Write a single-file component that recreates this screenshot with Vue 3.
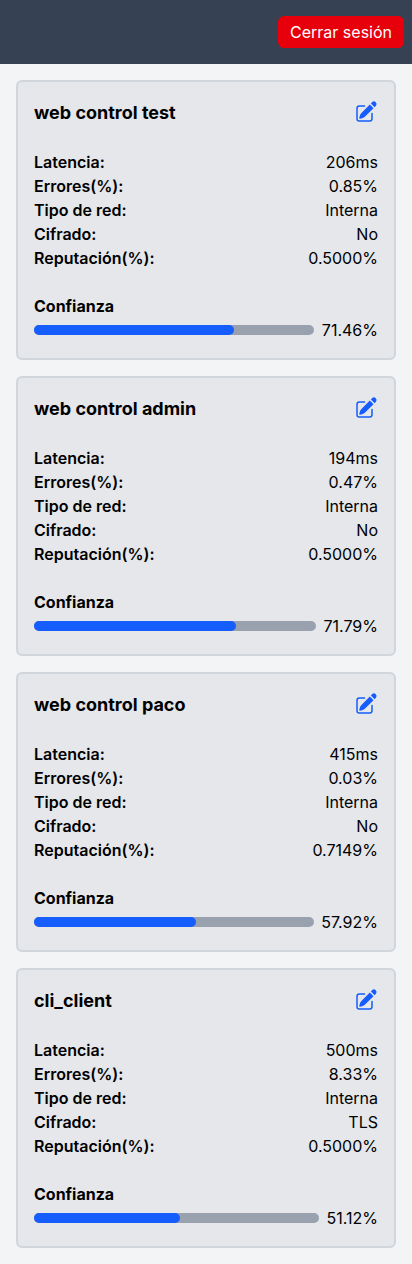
<script setup>
const cards = [
  { name: 'web control test', latency: '206ms', errors: '0.85%', net: 'Interna', cipher: 'No', rep: '0.5000%', trust: 71.46 },
  { name: 'web control admin', latency: '194ms', errors: '0.47%', net: 'Interna', cipher: 'No', rep: '0.5000%', trust: 71.79 },
  { name: 'web control paco', latency: '415ms', errors: '0.03%', net: 'Interna', cipher: 'No', rep: '0.7149%', trust: 57.92 },
  { name: 'cli_client', latency: '500ms', errors: '8.33%', net: 'Interna', cipher: 'TLS', rep: '0.5000%', trust: 51.12 },
]
</script>

<template>
  <div class="page">
    <header class="bar"><button class="logout">Cerrar sesión</button></header>
    <main class="list">
      <section v-for="c in cards" :key="c.name" class="card">
        <div class="head">
          <h2>{{ c.name }}</h2>
          <svg class="edit" viewBox="0 0 24 24" fill="currentColor">
            <path d="M21.731 2.269a2.625 2.625 0 0 0-3.712 0l-1.157 1.157 3.712 3.712 1.157-1.157a2.625 2.625 0 0 0 0-3.712ZM19.513 8.199l-3.712-3.712-8.4 8.4a5.25 5.25 0 0 0-1.32 2.214l-.8 2.685a.75.75 0 0 0 .933.933l2.685-.8a5.25 5.25 0 0 0 2.214-1.32l8.4-8.4Z" />
            <path d="M5.25 5.25a3 3 0 0 0-3 3v10.5a3 3 0 0 0 3 3h10.5a3 3 0 0 0 3-3V13.5a.75.75 0 0 0-1.5 0v5.25a1.5 1.5 0 0 1-1.5 1.5H5.25a1.5 1.5 0 0 1-1.5-1.5V8.25a1.5 1.5 0 0 1 1.5-1.5h5.25a.75.75 0 0 0 0-1.5H5.25Z" />
          </svg>
        </div>
        <dl class="rows">
          <div class="row"><dt>Latencia:</dt><dd>{{ c.latency }}</dd></div>
          <div class="row"><dt>Errores(%):</dt><dd>{{ c.errors }}</dd></div>
          <div class="row"><dt>Tipo de red:</dt><dd>{{ c.net }}</dd></div>
          <div class="row"><dt>Cifrado:</dt><dd>{{ c.cipher }}</dd></div>
          <div class="row"><dt>Reputación(%):</dt><dd>{{ c.rep }}</dd></div>
        </dl>
        <div class="label">Confianza</div>
        <div class="meter">
          <div class="track"><div class="fill" :style="{ width: c.trust + '%' }"></div></div>
          <span>{{ c.trust }}%</span>
        </div>
      </section>
    </main>
  </div>
</template>

<style>
body { margin: 0; background: #f3f4f6; }
</style>

<style scoped>
.page { min-height: 1264px; background: #f3f4f6; color: #000; font: 16px/24px Inter, sans-serif; }
.bar { height: 64px; box-sizing: border-box; padding: 0 8px; background: #364153; display: flex; align-items: center; justify-content: flex-end; }
.logout { border: 0; border-radius: 6px; background: #e7000b; color: #fff; font: inherit; padding: 4px 12px; }
.list { display: flex; flex-direction: column; gap: 16px; padding: 16px; }
.card { box-sizing: border-box; height: 280px; padding: 16px; border: 2px solid #d1d5dc; border-radius: 6px; background: #e5e7eb; }
.head { display: flex; align-items: center; justify-content: space-between; height: 28px; margin-bottom: 24px; }
h2 { margin: 0; padding-top: 2px; font-size: 18px; line-height: 28px; font-weight: 700; }
.edit { width: 24px; height: 24px; color: #155dfc; }
.rows { margin: 0 0 24px; }
.row { display: flex; justify-content: space-between; }
dt { font-weight: 600; }
.label { font-weight: 700; }
dd { margin: 0; }
.meter { display: flex; align-items: center; gap: 7.75px; }
.track { flex: 1; height: 10px; border-radius: 5px; background: #99a1af; }
.fill { height: 100%; border-radius: 5px; background: #155dfc; }
</style>
